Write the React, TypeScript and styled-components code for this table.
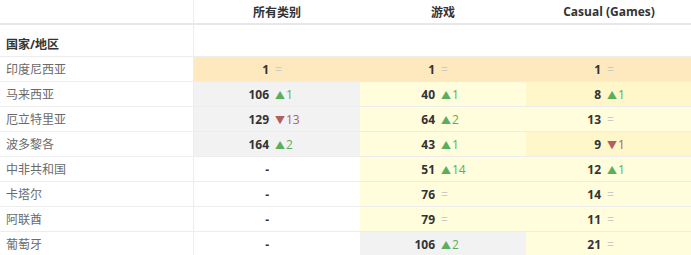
import React from "react";
import styled, { createGlobalStyle } from "styled-components";

const Global = createGlobalStyle`
  html, body { margin: 0; padding: 0; background: #fff; overflow: hidden; }
  body { font-family: "Open Sans", "Noto Sans CJK SC", sans-serif; font-size: 12px; color: #333; }
`;

const Table = styled.div`
  display: grid;
  grid-template-columns: 194px repeat(3, 166px);
  width: 692px;
`;

const HeadCell = styled.div<{ $first?: boolean }>`
  height: 23px;
  border-bottom: 2px solid #e8e8e8;
  border-right: ${(p) => (p.$first ? "1px solid #ededed" : "none")};
  display: flex;
  align-items: center;
  justify-content: center;
  font-weight: 700;
  color: #333;
  font-size: 12px;
`;

const SubCell = styled.div<{ $first?: boolean }>`
  height: 32px;
  box-sizing: border-box;
  border-bottom: 1px solid #ededed;
  border-right: ${(p) => (p.$first ? "1px solid #ededed" : "none")};
  display: flex;
  align-items: flex-end;
  padding: 0 6px 3px;
  font-weight: 700;
  color: #333;
`;

const CountryCell = styled.div`
  height: 25px;
  box-sizing: border-box;
  border-bottom: 1px solid #ededed;
  border-right: 1px solid #ededed;
  display: flex;
  align-items: center;
  padding-left: 6px;
  color: #6a6a6a;
`;

const bgMap: Record<string, string> = {
  o: "#fee9be",
  y: "#fffddb",
  m: "#fff6c9",
  g: "#f2f2f2",
  w: "#ffffff",
};

const RankCell = styled.div<{ $bg: string }>`
  height: 25px;
  box-sizing: border-box;
  border-bottom: 1px solid #ededed;
  background: ${(p) => bgMap[p.$bg]};
  display: flex;
  align-items: center;
`;

const Num = styled.span`
  flex: 0 0 calc(50% - 8px);
  text-align: right;
  font-weight: 700;
  color: #333;
`;

const Delta = styled.span<{ $kind: "up" | "down" | "eq" }>`
  margin-left: 6px;
  color: ${(p) => (p.$kind === "up" ? "#5aae5e" : p.$kind === "down" ? "#b06060" : "#cacaca")};
  font-weight: 400;
`;

const Tri = styled.span`
  font-size: 10px;
  margin-right: 1px;
`;

type Cell = { n?: string; d?: string; bg: string };

const rows: { name: string; cells: Cell[] }[] = [
  { name: "印度尼西亚", cells: [{ n: "1", d: "=", bg: "o" }, { n: "1", d: "=", bg: "o" }, { n: "1", d: "=", bg: "o" }] },
  { name: "马来西亚", cells: [{ n: "106", d: "+1", bg: "g" }, { n: "40", d: "+1", bg: "y" }, { n: "8", d: "+1", bg: "m" }] },
  { name: "厄立特里亚", cells: [{ n: "129", d: "-13", bg: "g" }, { n: "64", d: "+2", bg: "y" }, { n: "13", d: "=", bg: "y" }] },
  { name: "波多黎各", cells: [{ n: "164", d: "+2", bg: "g" }, { n: "43", d: "+1", bg: "y" }, { n: "9", d: "-1", bg: "m" }] },
  { name: "中非共和国", cells: [{ bg: "w" }, { n: "51", d: "+14", bg: "y" }, { n: "12", d: "+1", bg: "y" }] },
  { name: "卡塔尔", cells: [{ bg: "w" }, { n: "76", d: "=", bg: "y" }, { n: "14", d: "=", bg: "y" }] },
  { name: "阿联酋", cells: [{ bg: "w" }, { n: "79", d: "=", bg: "y" }, { n: "11", d: "=", bg: "y" }] },
  { name: "葡萄牙", cells: [{ bg: "w" }, { n: "106", d: "+2", bg: "g" }, { n: "21", d: "=", bg: "y" }] },
];

function renderDelta(d?: string) {
  if (!d) return null;
  if (d === "=") return <Delta $kind="eq">=</Delta>;
  if (d.startsWith("+"))
    return (
      <Delta $kind="up">
        <Tri>▲</Tri>
        {d.slice(1)}
      </Delta>
    );
  return (
    <Delta $kind="down">
      <Tri>▼</Tri>
      {d.slice(1)}
    </Delta>
  );
}

export default function App() {
  return (
    <>
      <Global />
      <Table>
        <HeadCell $first />
        <HeadCell>所有类别</HeadCell>
        <HeadCell>游戏</HeadCell>
        <HeadCell>Casual (Games)</HeadCell>
        <SubCell $first>国家/地区</SubCell>
        <SubCell />
        <SubCell />
        <SubCell />
        {rows.map((r) => (
          <React.Fragment key={r.name}>
            <CountryCell>{r.name}</CountryCell>
            {r.cells.map((c, i) => (
              <RankCell key={i} $bg={c.bg}>
                <Num>{c.n ?? "-"}</Num>
                {renderDelta(c.d)}
              </RankCell>
            ))}
          </React.Fragment>
        ))}
      </Table>
    </>
  );
}
